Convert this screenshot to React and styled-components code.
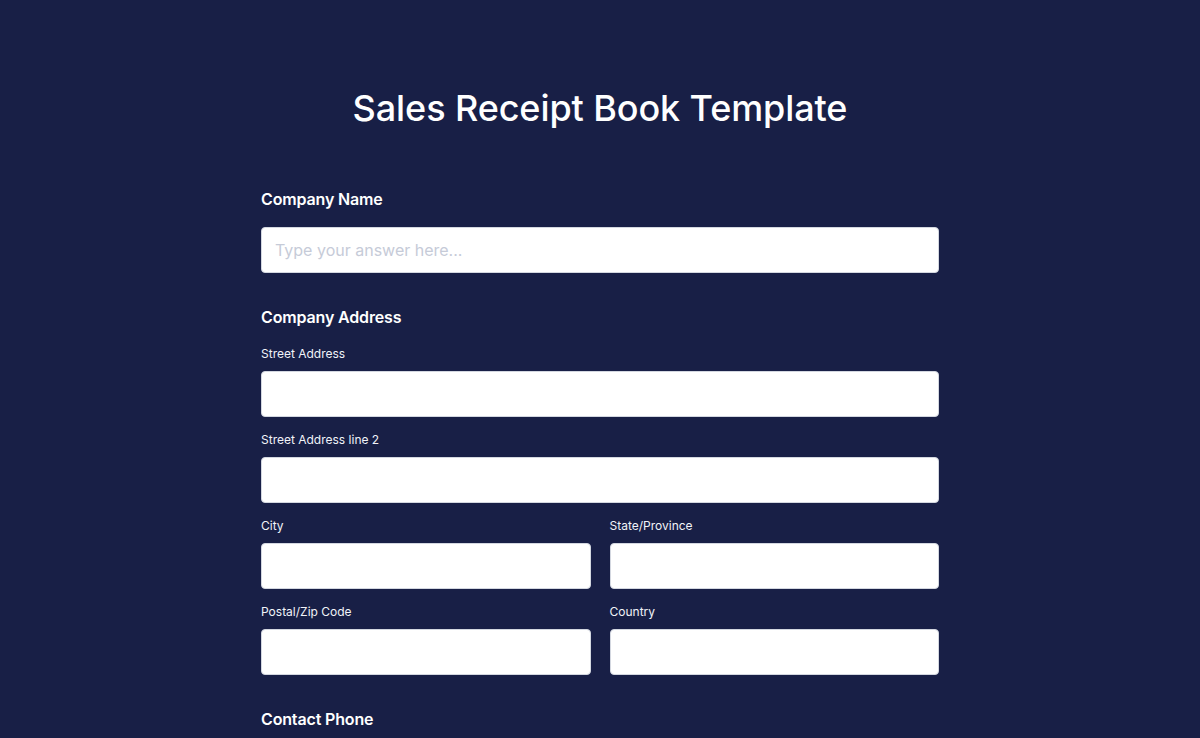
import React from 'react'
import styled, { createGlobalStyle } from 'styled-components'

const GlobalStyle = createGlobalStyle`
  * { box-sizing: border-box; }
  html, body {
    margin: 0;
    padding: 0;
    background: #181f46;
    font-family: Inter, 'Noto Sans', sans-serif;
  }
`

const Page = styled.main`
  min-height: 100vh;
  background: #181f46;
  color: #fff;
  padding-top: 86px;
  padding-bottom: 60px;
`

const Title = styled.h1`
  margin: 0 0 57px;
  text-align: center;
  font-size: 36px;
  line-height: 44px;
  font-weight: 500;
  letter-spacing: -0.1px;
`

const Form = styled.form`
  width: 678px;
  margin: 0 auto;
  display: flex;
  flex-direction: column;
  gap: 32px;
`

const Section = styled.div`
  display: flex;
  flex-direction: column;
`

const Heading = styled.label`
  font-size: 16px;
  line-height: 24px;
  font-weight: 600;
  letter-spacing: -0.15px;
  margin-bottom: ${p => p.$gap || 16}px;
`

const Fields = styled.div`
  display: grid;
  grid-template-columns: ${p => (p.$cols === 2 ? '1fr 1fr' : '1fr')};
  column-gap: 19px;
  row-gap: 13px;
  margin-top: ${p => p.$top || 0}px;
`

const Field = styled.div`
  display: flex;
  flex-direction: column;
`

const SubLabel = styled.label`
  font-size: 12px;
  line-height: 18px;
  font-weight: 400;
  color: #f1f3f8;
  padding-top: 1px;
  margin-bottom: 8px;
`

const Input = styled.input`
  height: 46px;
  width: 100%;
  border: 1px solid #d3d7e0;
  border-radius: 4px;
  background: #fff;
  padding: 0 13px;
  font-family: Inter, 'Noto Sans', sans-serif;
  font-size: 16px;
  color: #1f2937;
  outline: none;
  &::placeholder {
    color: #c6cbd8;
  }
`

const Sub = ({ label }) => (
  <Field>
    <SubLabel>{label}</SubLabel>
    <Input type="text" />
  </Field>
)

export default function App() {
  return (
    <>
      <GlobalStyle />
      <Page>
        <Title>Sales Receipt Book Template</Title>
        <Form>
          <Section>
            <Heading>Company Name</Heading>
            <Input type="text" placeholder="Type your answer here..." />
          </Section>
          <Section>
            <Heading $gap={15}>Company Address</Heading>
            <Fields>
              <Sub label="Street Address" />
              <Sub label="Street Address line 2" />
            </Fields>
            <Fields $cols={2} $top={13}>
              <Sub label="City" />
              <Sub label="State/Province" />
              <Sub label="Postal/Zip Code" />
              <Sub label="Country" />
            </Fields>
          </Section>
          <Section>
            <Heading>Contact Phone</Heading>
            <Input type="tel" />
          </Section>
        </Form>
      </Page>
    </>
  )
}
